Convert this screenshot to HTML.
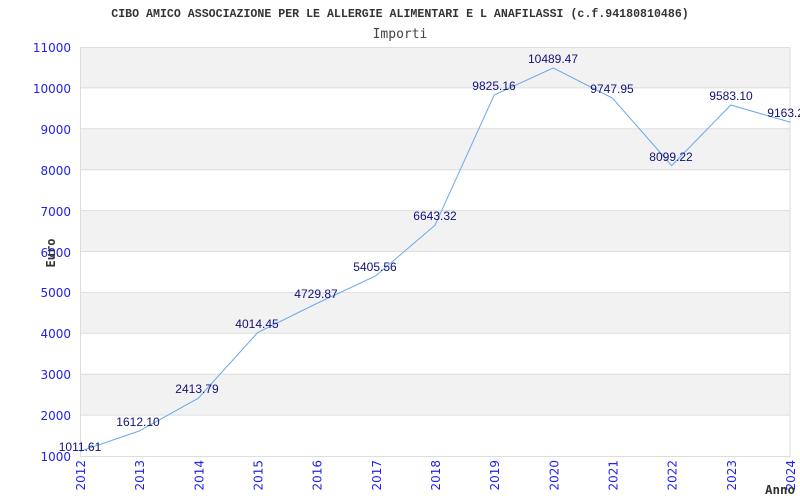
<!DOCTYPE html>
<html><head><meta charset="utf-8"><style>body{margin:0;background:#fff}svg{display:block}</style></head><body>
<svg width="800" height="500" xmlns="http://www.w3.org/2000/svg">
<rect width="800" height="500" fill="#fff"/>
<text x="400" y="17" text-anchor="middle" font-family="Liberation Mono, monospace" font-weight="bold" font-size="11.6" fill="#333">CIBO AMICO ASSOCIAZIONE PER LE ALLERGIE ALIMENTARI E L ANAFILASSI (c.f.94180810486)</text>
<text x="400" y="38" text-anchor="middle" font-family="DejaVu Sans Mono, monospace" font-size="13" fill="#444">Importi</text>
<g fill="#f2f2f2">
<rect x="80" y="47" width="710" height="40.9"/>
<rect x="80" y="128.8" width="710" height="40.9"/>
<rect x="80" y="210.6" width="710" height="40.9"/>
<rect x="80" y="292.4" width="710" height="40.9"/>
<rect x="80" y="374.2" width="710" height="40.9"/>
</g>
<g stroke="#ddd" stroke-width="1">
<line x1="80" y1="87.9" x2="790" y2="87.9"/><line x1="80" y1="128.8" x2="790" y2="128.8"/>
<line x1="80" y1="169.7" x2="790" y2="169.7"/><line x1="80" y1="210.6" x2="790" y2="210.6"/>
<line x1="80" y1="251.5" x2="790" y2="251.5"/><line x1="80" y1="292.4" x2="790" y2="292.4"/>
<line x1="80" y1="333.3" x2="790" y2="333.3"/><line x1="80" y1="374.2" x2="790" y2="374.2"/>
<line x1="80" y1="415.1" x2="790" y2="415.1"/>
</g>
<rect x="80.5" y="47.5" width="709.5" height="409" fill="none" stroke="#ddd"/>
<g font-family="DejaVu Sans, sans-serif" font-size="12" fill="#2222ee" text-anchor="end">
<text x="71" y="52">11000</text><text x="71" y="93">10000</text><text x="71" y="134">9000</text>
<text x="71" y="175">8000</text><text x="71" y="216">7000</text><text x="71" y="257">6000</text>
<text x="71" y="297">5000</text><text x="71" y="338">4000</text><text x="71" y="379">3000</text>
<text x="71" y="420">2000</text><text x="71" y="461">1000</text>
</g>
<g font-family="DejaVu Sans, sans-serif" font-size="12" fill="#2222ee" text-anchor="end">
<text transform="translate(85,460) rotate(-90)">2012</text>
<text transform="translate(144.2,460) rotate(-90)">2013</text>
<text transform="translate(203.3,460) rotate(-90)">2014</text>
<text transform="translate(262.5,460) rotate(-90)">2015</text>
<text transform="translate(321.7,460) rotate(-90)">2016</text>
<text transform="translate(380.8,460) rotate(-90)">2017</text>
<text transform="translate(440,460) rotate(-90)">2018</text>
<text transform="translate(499.2,460) rotate(-90)">2019</text>
<text transform="translate(558.3,460) rotate(-90)">2020</text>
<text transform="translate(617.5,460) rotate(-90)">2021</text>
<text transform="translate(676.7,460) rotate(-90)">2022</text>
<text transform="translate(735.8,460) rotate(-90)">2023</text>
<text transform="translate(795,460) rotate(-90)">2024</text>
</g>
<text transform="translate(55,253) rotate(-90)" text-anchor="middle" font-family="DejaVu Sans Mono, monospace" font-weight="bold" font-size="12" fill="#333">Euro</text>
<text x="780" y="494" text-anchor="middle" font-family="DejaVu Sans Mono, monospace" font-weight="bold" font-size="12.5" fill="#333">Anno</text>
<polyline fill="none" stroke="#66aaee" stroke-width="1" points="80,451.3 139.2,431 198.3,398.2 257.5,332.7 316.7,303.5 375.8,275.8 435,225.2 494.2,95 553.3,67.9 612.5,98.2 671.7,165.6 730.8,105 790,122.1"/>
<g font-family="Liberation Sans, sans-serif" font-size="12" fill="#111177" text-anchor="middle">
<text x="80" y="451">1011.61</text><text x="138" y="426">1612.10</text><text x="197" y="393">2413.79</text>
<text x="257" y="328">4014.45</text><text x="316" y="298">4729.87</text><text x="375" y="271">5405.56</text>
<text x="435" y="220">6643.32</text><text x="494" y="90">9825.16</text><text x="553" y="63">10489.47</text>
<text x="612" y="93">9747.95</text><text x="671" y="161">8099.22</text><text x="731" y="100">9583.10</text>
<text x="789" y="117">9163.22</text>
</g>
</svg>
</body></html>
